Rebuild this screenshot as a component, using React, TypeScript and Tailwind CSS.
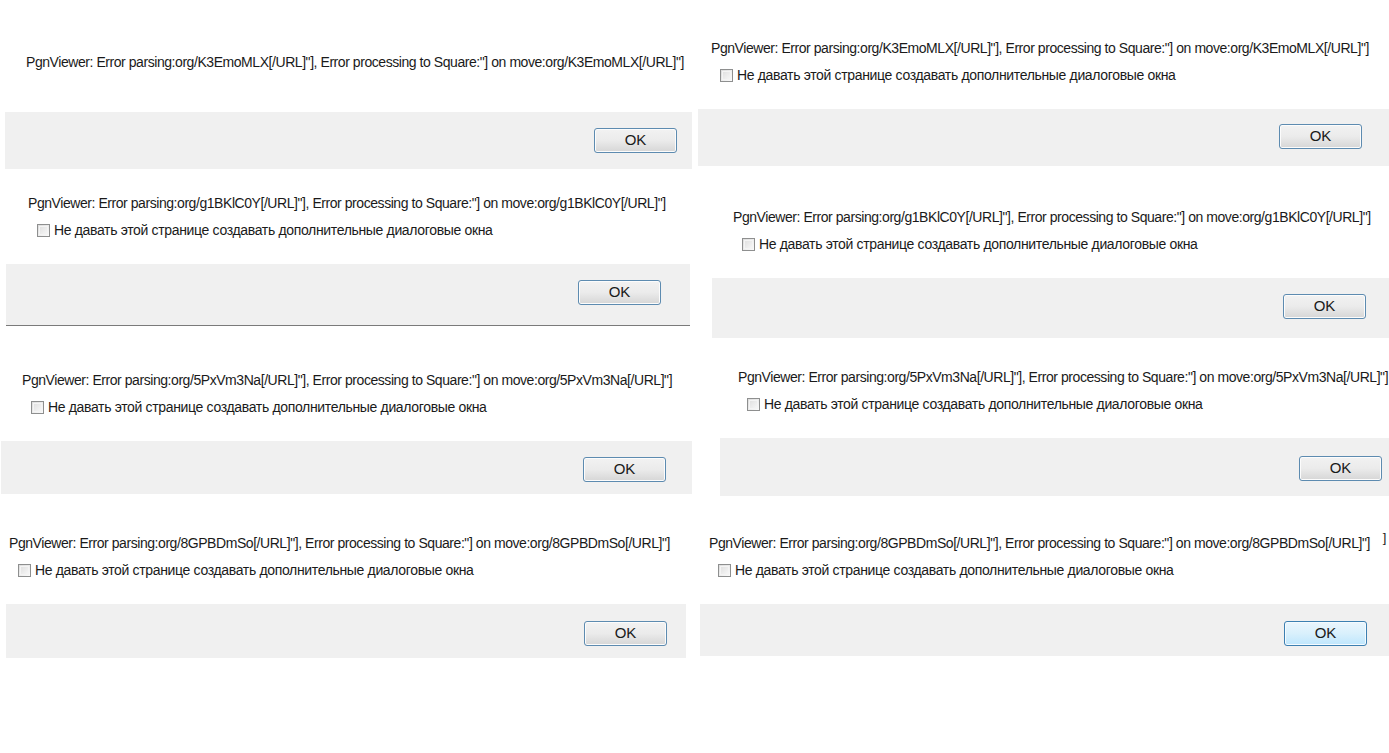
import React from "react";

type Dialog = {
  id: string;
  wrap: string;
  text: string;
  check?: string;
  footer: string;
  hover?: boolean;
  tail?: boolean;
};

const leftDialogs: Dialog[] = [
  {
    id: "K3EmoMLX",
    wrap: "pt-[54px]",
    text: "pl-[26px]",
    footer: "mt-[42px] ml-[5px] w-[687px] h-[57px] pr-[15px] pt-[16px]",
  },
  {
    id: "g1BKlC0Y",
    wrap: "mt-[26px]",
    text: "pl-[28px]",
    check: "pl-[37px]",
    footer: "ml-[6px] w-[684px] h-[62px] pr-[29px] pt-[16px] border-b border-[#7a7a7a]",
  },
  {
    id: "5PxVm3Na",
    wrap: "mt-[46px]",
    text: "pl-[22px]",
    check: "pl-[31px]",
    footer: "ml-[1px] w-[691px] h-[53px] pr-[26px] pt-[16px]",
  },
  {
    id: "8GPBDmSo",
    wrap: "mt-[41px]",
    text: "pl-[9px]",
    check: "pl-[18px]",
    footer: "ml-[6px] w-[680px] h-[54px] pr-[19px] pt-[17px]",
  },
];

const rightDialogs: Dialog[] = [
  {
    id: "K3EmoMLX",
    wrap: "pt-[40px]",
    text: "pl-[16px]",
    check: "pl-[25px]",
    footer: "ml-[3px] w-[691px] h-[57px] pr-[27px] pt-[15px]",
  },
  {
    id: "g1BKlC0Y",
    wrap: "mt-[43px]",
    text: "pl-[38px]",
    check: "pl-[47px]",
    footer: "ml-[17px] w-[677px] h-[60px] pr-[23px] pt-[16px]",
  },
  {
    id: "5PxVm3Na",
    wrap: "mt-[31px]",
    text: "pl-[43px]",
    check: "pl-[52px]",
    footer: "ml-[25px] w-[669px] h-[58px] pr-[7px] pt-[18px]",
  },
  {
    id: "8GPBDmSo",
    wrap: "mt-[39px]",
    text: "pl-[14px]",
    check: "pl-[23px]",
    footer: "ml-[5px] w-[689px] h-[52px] pr-[22px] pt-[17px]",
    hover: true,
    tail: true,
  },
];

function Checkbox() {
  return (
    <span className="h-[13px] w-[13px] shrink-0 border border-[#8e8f8f] bg-gradient-to-br from-[#dcdcdc] to-[#fbfbfb] p-[1px]">
      <span className="block h-full w-full border border-[#f4f4f4]" />
    </span>
  );
}

function OkButton({ hover }: { hover?: boolean }) {
  return (
    <button
      className={
        hover
          ? "h-[25px] w-[83px] rounded-[3px] border border-[#3c7fb1] bg-gradient-to-b from-[#eaf6fd] via-[#d9f0fc] to-[#bee6fd] text-[15px] tracking-normal text-[#1a1a1a] shadow-[inset_0_0_0_1px_#f4fbff]"
          : "h-[25px] w-[83px] rounded-[3px] border border-[#5d8bb0] bg-gradient-to-b from-[#f2f2f2] via-[#ebebeb] to-[#d6d6d6] text-[15px] tracking-normal text-[#1a1a1a] shadow-[inset_0_0_0_1px_#fcfcfc]"
      }
    >
      OK
    </button>
  );
}

function PgnDialog({ d }: { d: Dialog }) {
  const msg = `PgnViewer: Error parsing:org/${d.id}[/URL]"], Error processing to Square:"] on move:org/${d.id}[/URL]"]`;
  return (
    <div className="flex flex-col">
      <div className={d.wrap}>
        <div className={`flex h-4 items-center whitespace-nowrap ${d.text}`}>
          <span className="tracking-[-0.44px]">{msg}</span>
          {d.tail && <span className="ml-auto -translate-y-[5px] pr-[3px] text-[13px]">]</span>}
        </div>
        {d.check && (
          <label className={`mt-[11px] flex h-4 items-center gap-[4px] whitespace-nowrap ${d.check}`}>
            <Checkbox />
            <span>Не давать этой странице создавать дополнительные диалоговые окна</span>
          </label>
        )}
        {d.check && <div className="h-[26px]" />}
      </div>
      <div className={`flex justify-end bg-[#f0f0f0] ${d.footer}`}>
        <OkButton hover={d.hover} />
      </div>
    </div>
  );
}

export default function App() {
  return (
    <div className="grid h-[753px] w-[1389px] grid-cols-[695px_694px] overflow-hidden bg-white font-['Liberation_Sans',Arial,sans-serif] text-[14px] tracking-[-0.34px] text-[#1a1a1a]">
      <div className="flex flex-col overflow-hidden">
        {leftDialogs.map((d) => (
          <PgnDialog key={`l-${d.id}`} d={d} />
        ))}
      </div>
      <div className="flex flex-col overflow-hidden">
        {rightDialogs.map((d) => (
          <PgnDialog key={`r-${d.id}`} d={d} />
        ))}
      </div>
    </div>
  );
}
